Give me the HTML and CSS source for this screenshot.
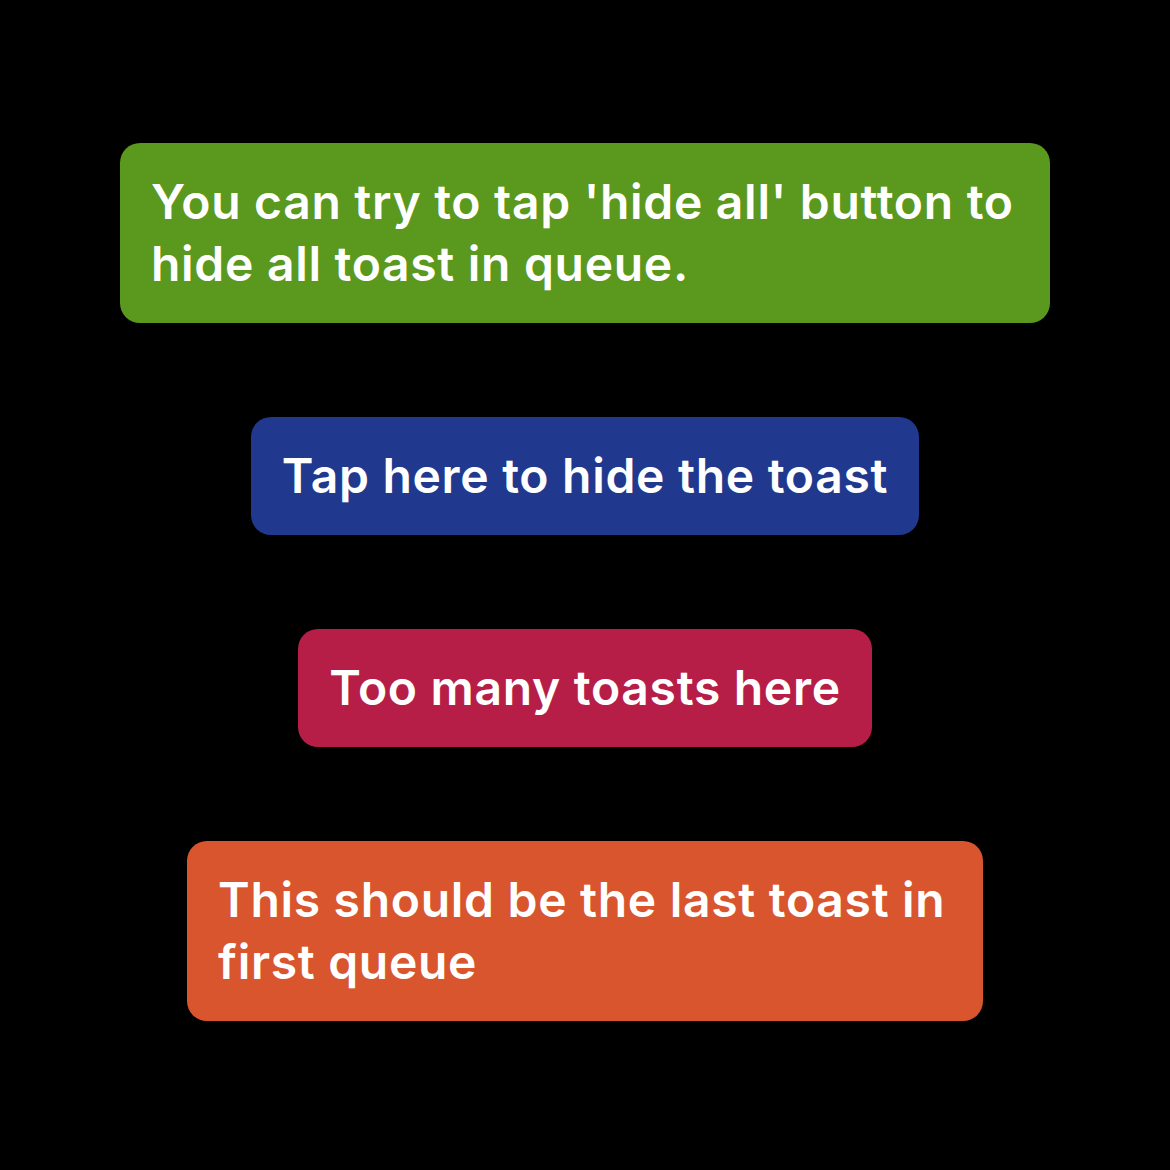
FILE: index.html
```html
<!DOCTYPE html>
<html>
<head>
<meta charset="utf-8">
<link rel="stylesheet" href="styles.css">
</head>
<body>
<main class="stack">
  <div class="toast toast-green">You can try to tap 'hide all' button to hide all toast in queue.</div>
  <div class="toast toast-blue">Tap here to hide the toast</div>
  <div class="toast toast-red">Too many toasts here</div>
  <div class="toast toast-orange">This should be the last toast in first queue</div>
</main>
</body>
</html>
```
FILE: styles.css
```css
html, body {
  margin: 0;
  padding: 0;
  background: #000;
}
body {
  width: 1170px;
  height: 1170px;
  overflow: hidden;
}
.stack {
  display: flex;
  flex-direction: column;
  align-items: center;
  gap: 94px;
  padding-top: 143px;
}
.toast {
  box-sizing: border-box;
  padding: 28px 31px;
  border-radius: 20px;
  color: #fff;
  font-family: Inter, "Noto Sans", sans-serif;
  font-weight: 600;
  font-size: 48px;
  line-height: 62px;
  letter-spacing: 0.7px;
  width: fit-content;
}
.toast-green {
  background: #5a981e;
  width: 930px;
}
.toast-blue {
  background: #20398f;
}
.toast-red {
  background: #b71e47;
}
.toast-orange {
  background: #d8552e;
  width: 796px;
}
```
